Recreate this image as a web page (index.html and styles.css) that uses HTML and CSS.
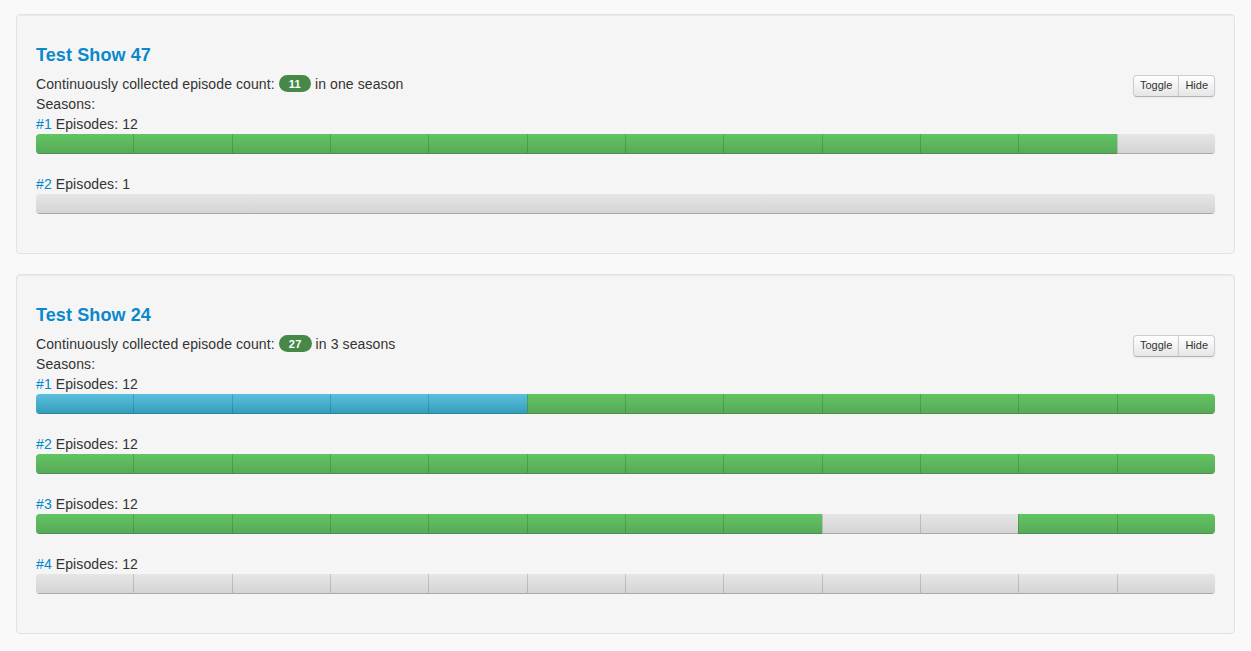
FILE: index.html
```html
<!DOCTYPE html>
<html>
<head>
<meta charset="utf-8">
<link rel="stylesheet" href="styles.css">
</head>
<body>
<div class="page">
  <div class="well">
    <h4 class="title">Test Show 47</h4>
    <div class="btn-group">
      <button class="btn">Toggle</button><button class="btn">Hide</button>
    </div>
    <div class="line">Continuously collected episode count: <span class="badge">11</span> in one season</div>
    <div class="line">Seasons:</div>
    <div class="season">
      <div class="line"><a class="num">#1</a> Episodes: 12</div>
      <div class="progress">
        <div class="seg g"></div><div class="seg g"></div><div class="seg g"></div><div class="seg g"></div><div class="seg g"></div><div class="seg g"></div><div class="seg g"></div><div class="seg g"></div><div class="seg g"></div><div class="seg g"></div><div class="seg g"></div><div class="seg e"></div>
      </div>
    </div>
    <div class="season">
      <div class="line"><a class="num">#2</a> Episodes: 1</div>
      <div class="progress">
        <div class="seg e"></div>
      </div>
    </div>
  </div>

  <div class="well">
    <h4 class="title">Test Show 24</h4>
    <div class="btn-group">
      <button class="btn">Toggle</button><button class="btn">Hide</button>
    </div>
    <div class="line">Continuously collected episode count: <span class="badge">27</span> in 3 seasons</div>
    <div class="line">Seasons:</div>
    <div class="season">
      <div class="line"><a class="num">#1</a> Episodes: 12</div>
      <div class="progress">
        <div class="seg b"></div><div class="seg b"></div><div class="seg b"></div><div class="seg b"></div><div class="seg b"></div><div class="seg g"></div><div class="seg g"></div><div class="seg g"></div><div class="seg g"></div><div class="seg g"></div><div class="seg g"></div><div class="seg g"></div>
      </div>
    </div>
    <div class="season">
      <div class="line"><a class="num">#2</a> Episodes: 12</div>
      <div class="progress">
        <div class="seg g"></div><div class="seg g"></div><div class="seg g"></div><div class="seg g"></div><div class="seg g"></div><div class="seg g"></div><div class="seg g"></div><div class="seg g"></div><div class="seg g"></div><div class="seg g"></div><div class="seg g"></div><div class="seg g"></div>
      </div>
    </div>
    <div class="season">
      <div class="line"><a class="num">#3</a> Episodes: 12</div>
      <div class="progress">
        <div class="seg g"></div><div class="seg g"></div><div class="seg g"></div><div class="seg g"></div><div class="seg g"></div><div class="seg g"></div><div class="seg g"></div><div class="seg g"></div><div class="seg e"></div><div class="seg e"></div><div class="seg g"></div><div class="seg g"></div>
      </div>
    </div>
    <div class="season">
      <div class="line"><a class="num">#4</a> Episodes: 12</div>
      <div class="progress">
        <div class="seg e"></div><div class="seg e"></div><div class="seg e"></div><div class="seg e"></div><div class="seg e"></div><div class="seg e"></div><div class="seg e"></div><div class="seg e"></div><div class="seg e"></div><div class="seg e"></div><div class="seg e"></div><div class="seg e"></div>
      </div>
    </div>
  </div>
</div>
</body>
</html>
```

FILE: styles.css
```css
html, body {
  margin: 0;
  padding: 0;
  background: #f9f9f9;
}
body {
  font-family: "Liberation Sans", Arial, Helvetica, sans-serif;
  font-size: 14px;
  line-height: 20px;
  color: #333333;
}
.page {
  padding: 14px 16px 0 16px;
}
.well {
  background: #f5f5f5;
  border: 1px solid #e3e3e3;
  border-radius: 4px;
  box-shadow: inset 0 1px 1px rgba(0, 0, 0, 0.05);
  padding: 19px 19px 19px 19px;
  margin-bottom: 20px;
  display: flow-root;
}
.title {
  margin: 10px 0 10px 0;
  font-size: 18px;
  line-height: 20px;
  font-weight: bold;
  color: #0a88cc;
  letter-spacing: 0.1px;
  position: relative;
  top: 1px;
}
.line {
  height: 20px;
  white-space: nowrap;
  letter-spacing: 0.1px;
}
.num {
  color: #0088cc;
  text-decoration: none;
}
.badge {
  display: inline-block;
  background: #468847;
  color: #ffffff;
  font-size: 11px;
  font-weight: bold;
  line-height: 14px;
  padding: 2px 10px 1px 10px;
  border-radius: 9px;
  vertical-align: baseline;
  position: relative;
  top: -1px;
  letter-spacing: 0.3px;
}
.btn-group {
  float: right;
  display: flex;
  margin-top: 1px;
}
.btn {
  font-family: "Liberation Sans", Arial, Helvetica, sans-serif;
  font-size: 11px;
  line-height: 15px;
  padding: 2px 6px 3px 6px;
  color: #333333;
  background: linear-gradient(#ffffff, #e6e6e6);
  border: 1px solid #cccccc;
  border-bottom-color: #b3b3b3;
  box-shadow: inset 0 1px 0 rgba(255, 255, 255, 0.2), 0 1px 2px rgba(0, 0, 0, 0.05);
  margin: 0;
  cursor: pointer;
}
.btn:first-child {
  border-radius: 4px 0 0 4px;
}
.btn:last-child {
  border-radius: 0 4px 4px 0;
  margin-left: -1px;
}
.season {
  margin-bottom: 20px;
}
.progress {
  display: flex;
  height: 20px;
  border-radius: 4px;
  overflow: hidden;
  background: linear-gradient(#e6e6e6, #d3d3d3);
  box-shadow: inset 0 1px 2px rgba(0, 0, 0, 0.1);
}
.seg {
  flex: 1 1 0;
  height: 20px;
  box-sizing: border-box;
  border-left: 1px solid rgba(0, 0, 0, 0.15);
  box-shadow: inset 0 -1px 0 rgba(0, 0, 0, 0.15);
}
.seg:first-child {
  border-left: none;
}
.seg.g {
  background: linear-gradient(#62c462, #57a957);
}
.seg.b {
  background: linear-gradient(#5bc0de, #339bb9);
}
.seg.e {
  background: linear-gradient(#e6e6e6, #d3d3d3);
  box-shadow: inset 0 -1px 0 rgba(0, 0, 0, 0.2);
}
```
